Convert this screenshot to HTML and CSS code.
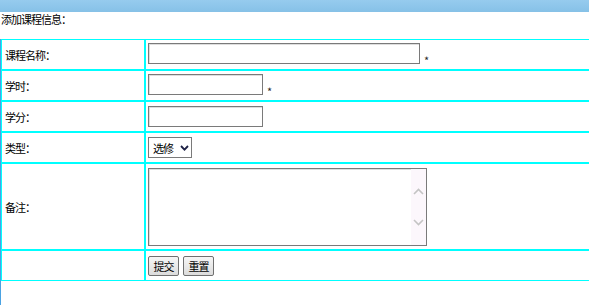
FILE: index.html
```html
<!DOCTYPE html>
<html lang="zh-CN">
<head>
  <meta charset="UTF-8" />
  <title>添加课程信息</title>
  <link rel="stylesheet" href="styles.css">
</head>
<body>

  <div class="topbar"></div>
  <div class="title">添加课程信息：</div>

  <div class="panel">
    <table class="form-table">
      <tr>
        <td class="label">课程名称：</td>
        <td class="field"><input type="text" class="txt txt-long" name="name"><span class="req">*</span></td>
      </tr>
      <tr>
        <td class="label">学时：</td>
        <td class="field"><input type="text" class="txt" name="hours"><span class="req">*</span></td>
      </tr>
      <tr>
        <td class="label">学分：</td>
        <td class="field"><input type="text" class="txt" name="credit"></td>
      </tr>
      <tr>
        <td class="label">类型：</td>
        <td class="field">
          <span class="select-wrap">
            <select class="sel" name="type">
              <option>选修</option>
              <option>必修</option>
            </select>
            <svg class="chev" width="9" height="6" viewBox="0 0 9 6"><path d="M1 1 L4.5 4.6 L8 1" fill="none" stroke="#1d2045" stroke-width="1.8"/></svg>
          </span>
        </td>
      </tr>
      <tr class="tall">
        <td class="label">备注：</td>
        <td class="field">
          <div class="memo">
            <textarea name="note"></textarea>
            <div class="scroll">
              <svg width="11" height="7" viewBox="0 0 11 7"><path d="M1 6 L5.5 1.5 L10 6" fill="none" stroke="#c4c4c4" stroke-width="1.6"/></svg>
              <svg width="11" height="7" viewBox="0 0 11 7"><path d="M1 1 L5.5 5.5 L10 1" fill="none" stroke="#c4c4c4" stroke-width="1.6"/></svg>
            </div>
          </div>
        </td>
      </tr>
      <tr>
        <td class="label"></td>
        <td class="field">
          <div class="actions">
            <button type="submit">提交</button>
            <button type="reset">重置</button>
          </div>
        </td>
      </tr>
    </table>
  </div>

</body>
</html>
```

FILE: styles.css
```css
:root {
  --bar: #8dc6ea;
  --line: #00ffff;
  --edge: #4aa2e2;
  --box: #7a7a7a;
}

body {
  margin: 0;
  font-family: "Noto Sans CJK SC", "Noto Sans", sans-serif;
  font-size: 11px;
  color: #000;
  background: #fff;
}

.topbar {
  width: 589px;
  height: 12px;
  background: linear-gradient(#96cbee, #86c1e7);
}

.title {
  height: 27px;
  line-height: 15px;
  padding-left: 1px;
  letter-spacing: -1px;
}

.panel {
  width: 588px;
  min-height: calc(100vh - 39px);
  border-left: 1px solid var(--edge);
}

.form-table {
  width: 588px;
  border-collapse: separate;
  border-spacing: 0;
}

.form-table td {
  height: 29px;
  padding: 0 2px;
  border: 1px solid var(--line);
  vertical-align: middle;
  line-height: 14px;
}

.form-table tr.tall td {
  height: 85px;
}

.label {
  width: 144px;
  box-sizing: border-box;
  letter-spacing: -1px;
  padding-left: 3px !important;
}

.field {
  border-right: none !important;
}

.txt {
  width: 115px;
  height: 21px;
  box-sizing: border-box;
  margin: 0;
  padding: 0 2px;
  border: 1px solid var(--box);
  box-shadow: inset 1px 1px 0 #dedede;
  vertical-align: middle;
  font: inherit;
}

.txt-long {
  width: 272px;
}

.req {
  display: inline-block;
  margin-left: 4px;
  font-size: 11px;
  line-height: 11px;
  vertical-align: -9px;
  color: #2a2a2a;
}

.select-wrap {
  position: relative;
  display: inline-block;
  vertical-align: middle;
}

.sel {
  display: block;
  width: 44px;
  height: 21px;
  margin: 0;
  padding: 0 0 0 4px;
  border: 1px solid var(--box);
  border-radius: 0;
  background: #fff;
  appearance: none;
  -webkit-appearance: none;
  font: inherit;
  letter-spacing: -1px;
  color: #000;
}

.chev {
  position: absolute;
  right: 3px;
  top: 8px;
  pointer-events: none;
}

.memo {
  display: inline-flex;
  width: 279px;
  height: 78px;
  box-sizing: border-box;
  border: 1px solid var(--box);
  box-shadow: inset 1px 1px 0 #dedede;
  vertical-align: middle;
}

.memo textarea {
  flex: 1;
  margin: 0;
  padding: 2px;
  border: none;
  outline: none;
  resize: none;
  background: transparent;
  font: inherit;
}

.scroll {
  width: 15px;
  padding: 19px 0;
  background: #fcf7fc;
  display: flex;
  flex-direction: column;
  justify-content: space-between;
  align-items: center;
}

.scroll svg {
  display: block;
}

.actions {
  display: flex;
  gap: 4px;
}

.actions button {
  width: 31px;
  height: 20px;
  margin: 0;
  padding: 0;
  border: 1px solid #707070;
  border-radius: 2px;
  background: linear-gradient(#f6f6f6, #dcdcdc);
  font: inherit;
  letter-spacing: -1px;
  color: #000;
}
```
